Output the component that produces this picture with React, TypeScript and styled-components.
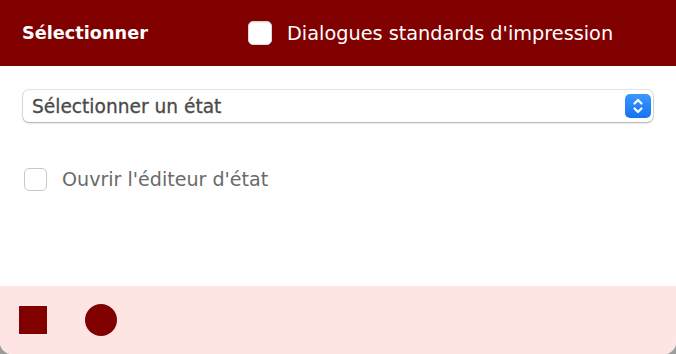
import React from 'react';
import styled, { createGlobalStyle } from 'styled-components';

const GlobalStyle = createGlobalStyle`
  html, body {
    margin: 0;
    padding: 0;
    background: #9b9b9b;
  }
  body {
    font-family: "DejaVu Sans", "Liberation Sans", sans-serif;
  }
`;

const Window = styled.div`
  width: 676px;
  height: 354px;
  display: flex;
  flex-direction: column;
  background: #ffffff;
  border-bottom-left-radius: 12px;
  border-bottom-right-radius: 12px;
  overflow: hidden;
`;

const Header = styled.div`
  height: 66px;
  flex: 0 0 66px;
  background: #800000;
  display: flex;
  align-items: center;
  padding-left: 22px;
  box-sizing: border-box;
`;

const Title = styled.div`
  color: #ffffff;
  font-size: 17.7px;
  font-weight: 700;
  width: 226px;
`;

const HeaderOption = styled.label`
  display: flex;
  align-items: center;
  gap: 15px;
  color: #ffffff;
  font-size: 19.3px;
`;

const Box = styled.span<{ $size: number; $light?: boolean }>`
  display: inline-block;
  flex: 0 0 auto;
  width: ${({ $size }) => $size}px;
  height: ${({ $size }) => $size}px;
  border-radius: 5px;
  background: #ffffff;
  box-sizing: border-box;
  border: ${({ $light }) => ($light ? '1px solid #c9c9c9' : '1px solid #d8d8d8')};
  box-shadow: ${({ $light }) => ($light ? 'none' : 'inset 0 1px 1px rgba(0,0,0,0.08)')};
`;

const Body = styled.div`
  flex: 1;
  padding: 24px 23px 0 23px;
  display: flex;
  flex-direction: column;
`;

const Select = styled.div`
  height: 32px;
  box-sizing: border-box;
  border-radius: 6px;
  background: #ffffff;
  box-shadow: 0 0 0 1px rgba(0,0,0,0.1), 0 1px 2px rgba(0,0,0,0.25);
  display: flex;
  align-items: center;
  justify-content: space-between;
  padding: 0 2px 0 9px;
`;

const SelectText = styled.span`
  color: #4a4a4a;
  font-size: 18.6px;
  font-weight: 400;
  -webkit-text-stroke: 0.3px #4a4a4a;
`;

const Stepper = styled.span`
  width: 26px;
  height: 24px;
  border-radius: 5px;
  background: linear-gradient(#3a97ff, #1673f0);
  display: flex;
  align-items: center;
  justify-content: center;
`;

const CheckRow = styled.label`
  margin-top: 46px;
  margin-left: 1px;
  display: flex;
  align-items: center;
  gap: 15px;
  color: #6a6a6a;
  font-size: 19.1px;
`;

const Footer = styled.div`
  height: 68px;
  flex: 0 0 68px;
  background: #ffe4e4;
  display: flex;
  align-items: center;
  padding-left: 19px;
  gap: 38px;
`;

const StopButton = styled.span`
  width: 28px;
  height: 28px;
  background: #800000;
`;

const RecordButton = styled.span`
  width: 32px;
  height: 32px;
  border-radius: 50%;
  background: #800000;
`;

export default function App() {
  return (
    <>
      <GlobalStyle />
      <Window>
        <Header>
          <Title>Sélectionner</Title>
          <HeaderOption>
            <Box $size={24} />
            Dialogues standards d'impression
          </HeaderOption>
        </Header>
        <Body>
          <Select>
            <SelectText>Sélectionner un état</SelectText>
            <Stepper>
              <svg width="12" height="18" viewBox="0 0 12 18" fill="none" stroke="#fff" strokeWidth="2.2" strokeLinecap="round" strokeLinejoin="round">
                <path d="M2.5 6.5 L6 3 L9.5 6.5" />
                <path d="M2.5 11.5 L6 15 L9.5 11.5" />
              </svg>
            </Stepper>
          </Select>
          <CheckRow>
            <Box $size={23} $light />
            Ouvrir l'éditeur d'état
          </CheckRow>
        </Body>
        <Footer>
          <StopButton />
          <RecordButton />
        </Footer>
      </Window>
    </>
  );
}
